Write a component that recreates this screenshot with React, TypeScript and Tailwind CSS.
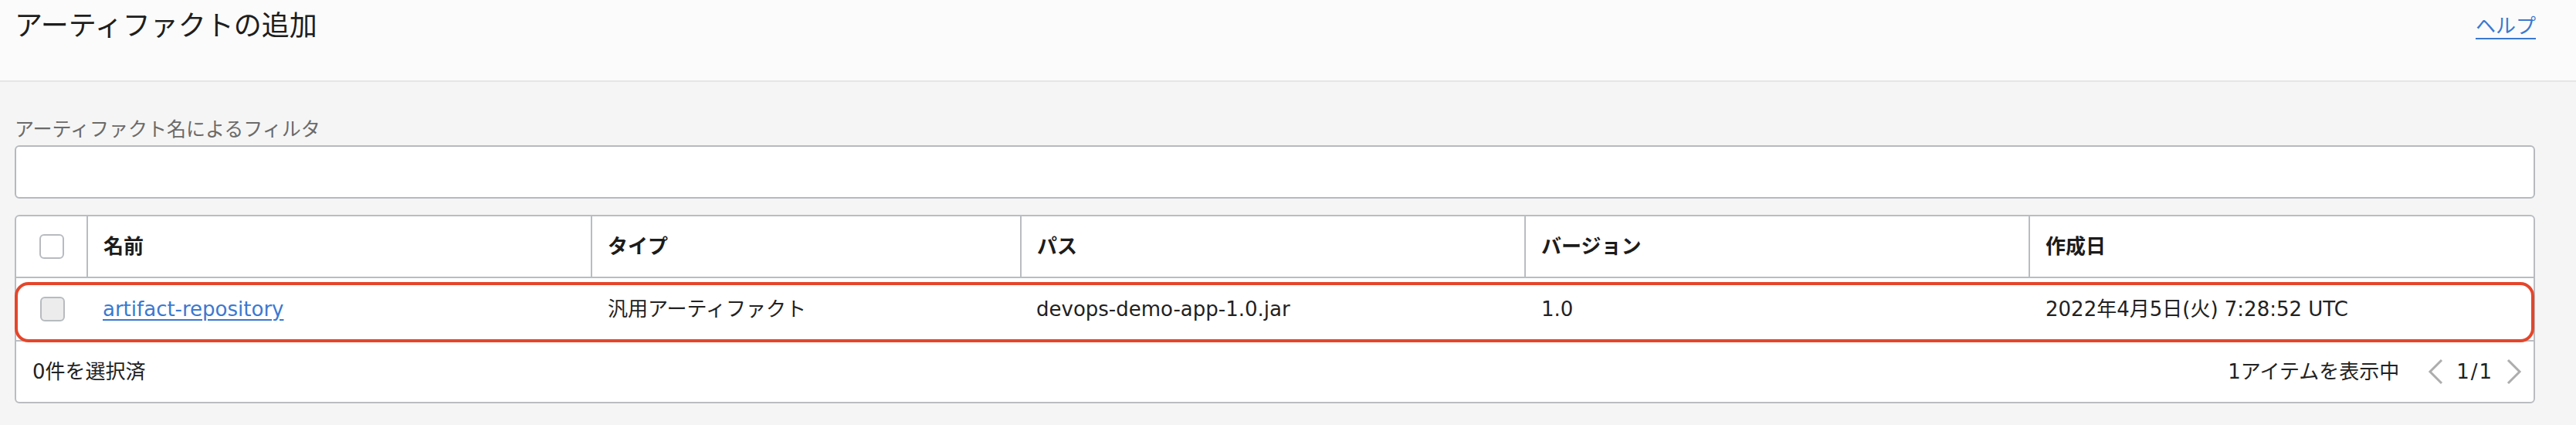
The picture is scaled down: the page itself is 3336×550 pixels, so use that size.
import React from 'react';

const font = "font-['DejaVu_Sans','Noto_Sans_CJK_JP',sans-serif]";

const columns = ['名前', 'タイプ', 'パス', 'バージョン', '作成日'];

const Checkbox = ({ filled }: { filled?: boolean }) => (
  <span
    className={`block w-[32px] h-[32px] rounded-[6px] border-2 border-[#b7bbc0] ${filled ? 'bg-[#ececec]' : 'bg-white'}`}
  />
);

const Chevron = ({ dir }: { dir: 'left' | 'right' }) => (
  <svg width="22" height="34" viewBox="0 0 22 34" fill="none">
    <polyline
      points={dir === 'left' ? '19,2 4,17 19,32' : '3,2 18,17 3,32'}
      stroke="#adadad"
      strokeWidth="3"
    />
  </svg>
);

export default function App() {
  return (
    <div className={`w-full h-[550px] bg-[#f5f5f5] text-[#222] ${font}`}>
      <header className="h-[106px] bg-[#fbfbfb] border-b-2 border-[#e6e6e6] pl-[19px] pr-[52px] pt-[12px] flex items-start justify-between">
        <h1 className="text-[36px] leading-[44px] text-[#1e1e1e]">アーティファクトの追加</h1>
        <a href="#" className="text-[26px] leading-[44px] text-[#3a79d0] underline underline-offset-[6px] decoration-2">
          ヘルプ
        </a>
      </header>

      <main className="pl-[19px] pr-[53px]">
        <label className="block mt-[47px] text-[25px] leading-[30px] text-[#6a6a6a]">
          アーティファクト名によるフィルタ
        </label>
        <input
          type="text"
          className="block mt-[5px] w-full h-[69px] bg-white border-2 border-[#b6babf] rounded-[6px] outline-none px-4 text-[26px]"
        />

        <div className="mt-[21px] bg-white border-2 border-[#b9bdc2] rounded-[6px] text-[26px]">
          <div className="grid grid-cols-[93px_653px_556px_653px_653px_1fr] h-[80px] border-b-2 border-[#b9bdc2]">
            <div className="flex items-center justify-center border-r-2 border-[#b9bdc2]">
              <Checkbox />
            </div>
            {columns.map((c, i) => (
              <div
                key={c}
                className={`flex items-center pl-[20px] font-bold text-[#1c1c1c] ${i < columns.length - 1 ? 'border-r-2 border-[#b9bdc2]' : ''}`}
              >
                {c}
              </div>
            ))}
          </div>

          <div className="relative grid grid-cols-[93px_653px_556px_653px_653px_1fr] h-[82px] border-b-2 border-[#b9bdc2]">
            <div className="flex items-center justify-center">
              <Checkbox filled />
            </div>
            <div className="flex items-center pl-[19px]">
              <a href="#" className="text-[#3a79d0] underline underline-offset-[4px]">
                artifact-repository
              </a>
            </div>
            <div className="flex items-center pl-[20px]">汎用アーティファクト</div>
            <div className="flex items-center pl-[19px]">devops-demo-app-1.0.jar</div>
            <div className="flex items-center pl-[20px]">1.0</div>
            <div className="flex items-center pl-[20px]">2022年4月5日(火) 7:28:52 UTC</div>
            <div className="absolute top-[5px] bottom-[-3px] left-[-2px] right-[-1px] border-4 border-[#e4462b] rounded-[18px] pointer-events-none" />
          </div>

          <div className="h-[78px] flex items-center justify-between pl-[21px] pr-[14px]">
            <span>0件を選択済</span>
            <div className="flex items-center">
              <span className="mr-[36px]">1アイテムを表示中</span>
              <Chevron dir="left" />
              <span className="mx-[16px] tracking-[2px]">1/1</span>
              <Chevron dir="right" />
            </div>
          </div>
        </div>
      </main>
    </div>
  );
}
